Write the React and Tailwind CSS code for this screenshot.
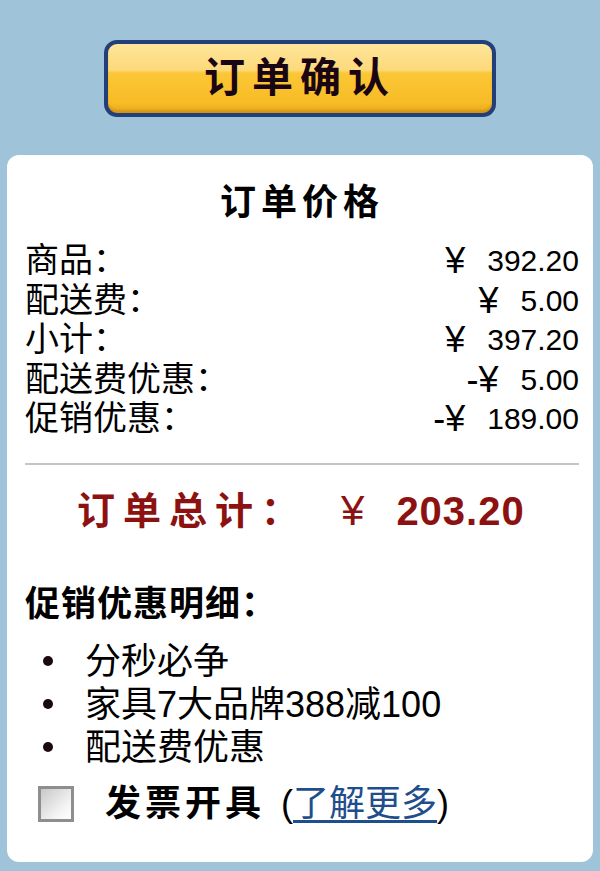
const rows = [
  ["商品：", "¥", "392.20"],
  ["配送费：", "¥", "5.00"],
  ["小计：", "¥", "397.20"],
  ["配送费优惠：", "-¥", "5.00"],
  ["促销优惠：", "-¥", "189.00"],
];

const promos = ["分秒必争", "家具7大品牌388减100", "配送费优惠"];

export default function App() {
  return (
    <div
      className="min-h-[871px] bg-[#9fc4da] px-[7px] pt-[40px] pb-[7px] text-black"
      style={{ fontFamily: '"Liberation Sans", "Noto Sans CJK SC", sans-serif' }}
    >
      <div className="flex justify-center">
        <button className="flex h-[77px] w-[392px] items-center justify-center rounded-[13px] border-[4px] border-[#233f7a] bg-[linear-gradient(to_bottom,#fee69a_0%,#fdd97a_38%,#fbc736_42%,#f7bc26_85%,#e6a81a_100%)] text-[41px] font-bold tracking-[7px] text-[#1a0514] shadow-[inset_0_-3px_2px_rgba(150,90,0,0.25)]">
          订单确认
        </button>
      </div>

      <div className="mt-[38px] rounded-[12px] bg-white pt-[28px] pb-[36px] pl-[18px] pr-[14px]">
        <h2 className="text-center text-[36px] font-bold leading-[40px] tracking-[5px]">订单价格</h2>

        <div className="mt-[18px]">
          {rows.map(([label, sign, value]) => (
            <div key={label} className="flex h-[39.5px] items-center justify-between text-[34px] leading-[39.5px]">
              <span>{label}</span>
              <span className="flex items-center">
                <span className="text-[36px] leading-[39.5px]">{sign}</span>
                <span className="ml-[22px] text-[30px]">{value}</span>
              </span>
            </div>
          ))}
        </div>

        <div className="mt-[24px] h-[2px] bg-[#c4c4c4]" />

        <div className="mt-[24px] flex h-[44px] items-center pl-[52px] text-[38px] font-bold leading-[44px] text-[#8c1212]">
          <span className="tracking-[8px]">订单总计：</span>
          <span className="ml-[34px] font-normal text-[42px]">¥</span>
          <span className="ml-[32px] text-[40px] tracking-[1px]">203.20</span>
        </div>

        <h3 className="mt-[51px] text-[35px] font-bold leading-[40px] tracking-[1px]">促销优惠明细：</h3>

        <ul className="mt-[16px]">
          {promos.map((p) => (
            <li key={p} className="flex h-[43px] items-center text-[36px] leading-[43px]">
              <span className="ml-[18px] h-[10px] w-[10px] rounded-full bg-[#1a0a10]" />
              <span className="ml-[32px]">{p}</span>
            </li>
          ))}
        </ul>

        <div className="mt-[13px] flex h-[44px] items-center">
          <span className="ml-[13px] h-[36px] w-[36px] border-[3px] border-[#8e8e8e] bg-[linear-gradient(135deg,#c8c8c8,#f4f4f4_70%,#ffffff)]" />
          <span className="ml-[31px] text-[36px] font-bold tracking-[4px]">发票开具</span>
          <span className="ml-[16px] text-[36px]">
            (<a href="#" className="text-[#1f4e8c] underline underline-offset-4">了解更多</a>)
          </span>
        </div>
      </div>
    </div>
  );
}
